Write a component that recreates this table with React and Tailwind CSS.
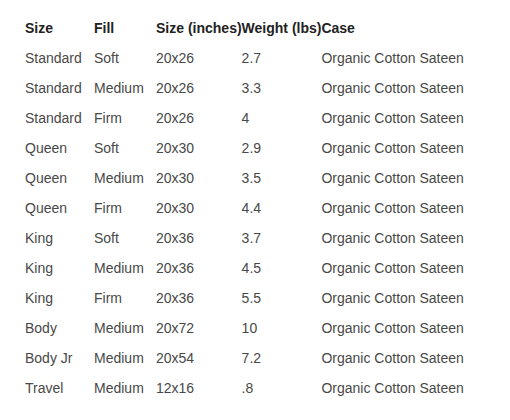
const rows = [
  ["Standard", "Soft", "20x26", "2.7"],
  ["Standard", "Medium", "20x26", "3.3"],
  ["Standard", "Firm", "20x26", "4"],
  ["Queen", "Soft", "20x30", "2.9"],
  ["Queen", "Medium", "20x30", "3.5"],
  ["Queen", "Firm", "20x30", "4.4"],
  ["King", "Soft", "20x36", "3.7"],
  ["King", "Medium", "20x36", "4.5"],
  ["King", "Firm", "20x36", "5.5"],
  ["Body", "Medium", "20x72", "10"],
  ["Body Jr", "Medium", "20x54", "7.2"],
  ["Travel", "Medium", "12x16", ".8"],
];

export default function App() {
  return (
    <div className="w-[510px] h-[420px] bg-white pt-[13px] pl-[25px] font-['Liberation_Sans',Arial,sans-serif] text-[14px]">
      <table className="border-collapse text-left">
        <thead>
          <tr className="h-[30px] text-[#222]">
            <th className="w-[69px] p-0 font-bold">Size</th>
            <th className="w-[62px] p-0 font-bold">Fill</th>
            <th className="w-[85px] p-0 font-bold whitespace-nowrap">Size (inches)</th>
            <th className="w-[79px] p-0 font-bold whitespace-nowrap">Weight (lbs)</th>
            <th className="p-0 font-bold">Case</th>
          </tr>
        </thead>
        <tbody className="text-[#484848]">
          {rows.map((r, i) => (
            <tr key={i} className="h-[30px]">
              <td className="p-0 whitespace-nowrap">{r[0]}</td>
              <td className="p-0">{r[1]}</td>
              <td className="p-0">{r[2]}</td>
              <td className="p-0">{r[3]}</td>
              <td className="p-0 whitespace-nowrap">Organic Cotton Sateen</td>
            </tr>
          ))}
        </tbody>
      </table>
    </div>
  );
}
